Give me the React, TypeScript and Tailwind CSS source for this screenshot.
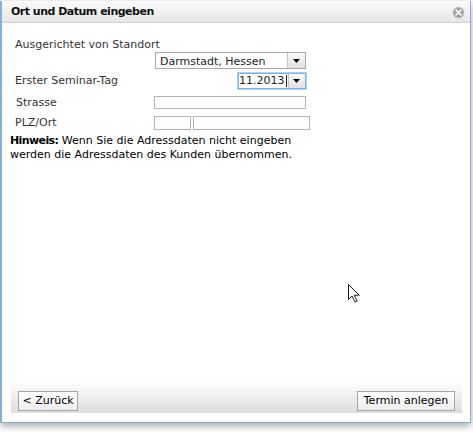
import React from "react";

const font = { fontFamily: '"DejaVu Sans", Verdana, sans-serif' };

const Arrow = () => (
	<svg width="7" height="4" viewBox="0 0 7 4">
		<path d="M0 0h7L3.5 4z" fill="#000" />
	</svg>
);

const Button = ({ label, className }: { label: string; className?: string }) => (
	<button
		className={`h-[20px] whitespace-nowrap border border-[#a7a7a7] bg-gradient-to-b from-[#ffffff] to-[#ececec] px-0 text-center text-[11px] leading-[18px] text-black ${className ?? ""}`}
	>
		{label}
	</button>
);

export default function App() {
	return (
		<div
			className="relative h-[432px] w-[473px] overflow-hidden bg-white text-[11px]"
			style={font}
		>
			<div className="mt-[1px] flex h-[422px] w-[471px] flex-col border-b border-l-2 border-r border-[#84b0dc] bg-white shadow-[0_3px_8px_rgba(0,0,0,0.35)]">
				<div className="flex h-[22px] items-center justify-between border-b border-[#d2d2d2] bg-gradient-to-b from-[#fbfbfb] to-[#e6e6e6] pl-[9px] pr-[6px] pt-[1px]">
					<span className="text-[11px] font-bold tracking-[-0.5px] text-[#111]">
						Ort und Datum eingeben
					</span>
					<span className="flex h-[11px] w-[11px] items-center justify-center rounded-full bg-[#a3a3a3]">
						<svg width="7" height="7" viewBox="0 0 7 7">
							<path
								d="M1 1l5 5M6 1L1 6"
								stroke="#fff"
								strokeWidth="1.6"
								strokeLinecap="round"
							/>
						</svg>
					</span>
				</div>

				<div className="flex flex-1 flex-col pl-[8px] pt-[15px] text-[#333]">
					<div className="pl-[5px] leading-[14px]">Ausgerichtet von Standort</div>
					<div className="pl-[145px]">
						<div className="flex h-[17px] w-[151px] border border-[#a9a9a9] bg-white">
							<span className="flex-1 pl-[4px] pt-[1px] leading-[15px] text-[#222]">
								Darmstadt, Hessen
							</span>
							<span className="flex w-[18px] items-center justify-center border-l border-[#c4c4c4] bg-gradient-to-b from-[#fafafa] to-[#e2e2e2]">
								<Arrow />
							</span>
						</div>
					</div>

					<div className="mt-[4px] flex items-center">
						<span className="w-[228px] pl-[5px]">Erster Seminar-Tag</span>
						<div className="flex h-[16px] w-[68px] border border-[#7ab6ea] bg-white shadow-[0_0_0_1px_#a9d2f3]">
							<span className="flex flex-1 items-center justify-end pr-[1px] leading-[14px] text-[#222]">
								11.2013
								<span className="ml-[1px] h-[12px] w-[1px] bg-[#222]" />
							</span>
							<span className="flex w-[19px] items-center justify-center border-l border-[#c4c4c4] bg-gradient-to-b from-[#fafafa] to-[#e2e2e2]">
								<Arrow />
							</span>
						</div>
					</div>

					<div className="mt-[5px] flex items-center">
						<span className="w-[144px] pl-[6px]">Strasse</span>
						<div className="h-[13px] w-[152px] border border-[#b4b4b4] bg-white" />
					</div>

					<div className="mt-[4px] flex items-center">
						<span className="w-[144px] pl-[5px]">PLZ/Ort</span>
						<div className="h-[14px] w-[37px] border border-[#b4b4b4] bg-white" />
						<div className="ml-[2px] h-[14px] w-[117px] border border-[#b4b4b4] bg-white" />
					</div>

					<p className="mt-[2px] pl-0 leading-[14px] text-black">
						<b className="tracking-[-0.6px]">Hinweis:</b> Wenn Sie die Adressdaten nicht eingeben
						<br />
						werden die Adressdaten des Kunden übernommen.
					</p>

					<div className="mb-[9px] ml-[1px] mr-[8px] mt-auto flex h-[31px] items-center justify-between bg-gradient-to-b from-[#ffffff] to-[#dcdcdc] px-[7px] pt-[6px]">
						<Button label="< Zurück" className="w-[60px]" />
						<Button label="Termin anlegen" className="w-[98px]" />
					</div>
				</div>
			</div>

			<svg
				className="absolute left-[348px] top-[284px]"
				width="13"
				height="19"
				viewBox="0 0 13 19"
			>
				<path
					d="M0.5 0.5v15l3.5-3.5 3 6 2.2-1-3-5.8h5z"
					fill="#fff"
					stroke="#1a1a2e"
					strokeWidth="1"
					strokeLinejoin="round"
				/>
			</svg>
		</div>
	);
}
